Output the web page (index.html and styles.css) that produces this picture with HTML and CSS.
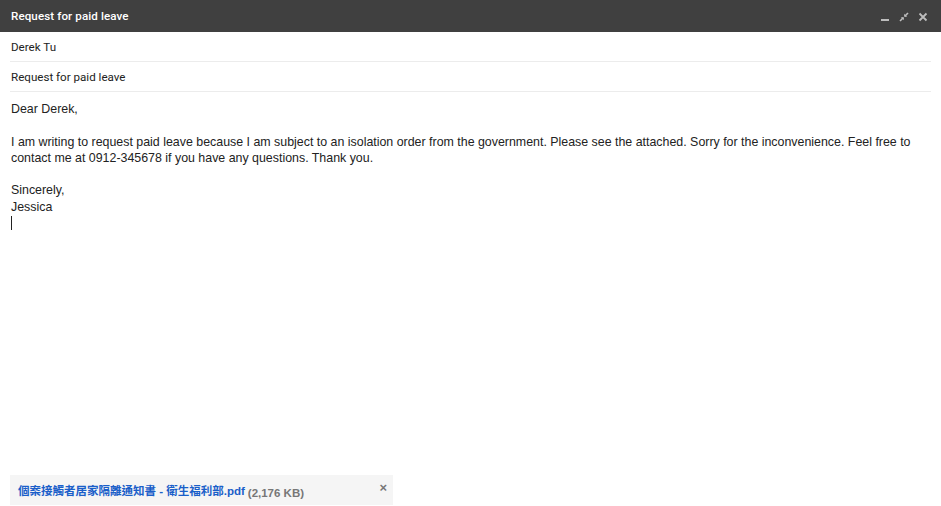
FILE: index.html
```html
<!DOCTYPE html>
<html>
<head>
<meta charset="utf-8">
<link rel="stylesheet" href="styles.css">
</head>
<body>
<div class="compose">
  <div class="header">
    <span class="title">Request for paid leave</span>
    <div class="actions">
      <svg class="icon" width="10" height="10" viewBox="0 0 10 10"><rect x="1" y="7" width="8" height="2" fill="#bdbdbd"/></svg>
      <svg class="icon" width="10" height="10" viewBox="0 0 10 10"><path d="M9 1L5.8 4.2" stroke="#bdbdbd" stroke-width="1.6"/><path d="M5.2 1.8V4.8H8.2Z" fill="#bdbdbd"/><path d="M1 9L4.2 5.8" stroke="#bdbdbd" stroke-width="1.6"/><path d="M4.8 8.2V5.2H1.8Z" fill="#bdbdbd"/></svg>
      <svg class="icon" width="10" height="10" viewBox="0 0 10 10"><path d="M1.5 1.5L8.5 8.5M8.5 1.5L1.5 8.5" stroke="#bdbdbd" stroke-width="1.8"/></svg>
    </div>
  </div>
  <div class="field">Derek Tu</div>
  <div class="field">Request for paid leave</div>
  <div class="body">
    <div>Dear Derek,</div>
    <div><br></div>
    <div>I am writing to request paid leave because I am subject to an isolation order from the government. Please see the attached. Sorry for the inconvenience. Feel free to contact me at 0912-345678 if you have any questions. Thank you.</div>
    <div><br></div>
    <div>Sincerely,</div>
    <div>Jessica</div>
    <div><span class="caret"></span></div>
  </div>
  <div class="spacer"></div>
  <div class="attachment">
    <span class="att-name">個案接觸者居家隔離通知書 - 衛生福利部.pdf</span>
    <span class="att-size">(2,176 KB)</span>
    <span class="att-close">×</span>
  </div>
</div>
</body>
</html>
```
FILE: styles.css
```css
html, body {
  margin: 0;
  padding: 0;
  background: #fff;
}
.compose {
  width: 941px;
  height: 506px;
  display: flex;
  flex-direction: column;
  font-family: Roboto, "Noto Sans CJK TC", sans-serif;
}
.header {
  height: 32px;
  background: #404040;
  display: flex;
  align-items: center;
  justify-content: space-between;
  padding: 0 13px 0 11px;
  box-sizing: border-box;
}
.title {
  color: #fff;
  font-size: 11.6px;
  font-weight: 500;
  letter-spacing: 0.1px;
}
.actions {
  display: flex;
  gap: 9px;
  align-items: center;
  padding-top: 1px;
}
.field {
  margin: 0 10px;
  height: 29px;
  padding-left: 1px;
  border-bottom: 1px solid #ececec;
  display: flex;
  align-items: center;
  font-size: 11.6px;
  color: #222;
}
.body {
  padding: 9px 11px 0 11px;
  font-family: Arial, "Liberation Sans", sans-serif;
  font-size: 12.4px;
  line-height: 16.3px;
  color: #222;
}
.caret {
  display: inline-block;
  width: 1px;
  height: 14px;
  background: #222;
  vertical-align: -3px;
}
.spacer {
  flex: 1;
}
.attachment {
  margin: 0 0 1px 10px;
  width: 383px;
  height: 30px;
  background: #f5f5f5;
  display: flex;
  align-items: center;
  padding: 0 6px 0 8px;
  box-sizing: border-box;
}
.att-name {
  color: #1a5fc9;
  font-weight: 700;
  font-size: 11.5px;
  font-family: Arial, "Liberation Sans", "Noto Sans CJK TC", sans-serif;
}
.att-size {
  color: #777;
  font-weight: 700;
  font-size: 11.5px;
  margin-left: 3px;
  margin-top: 6px;
  font-family: Arial, "Liberation Sans", sans-serif;
}
.att-close {
  margin-left: auto;
  color: #777;
  font-weight: 700;
  font-size: 13px;
  margin-top: -5px;
  font-family: Arial, "Liberation Sans", sans-serif;
}
```
